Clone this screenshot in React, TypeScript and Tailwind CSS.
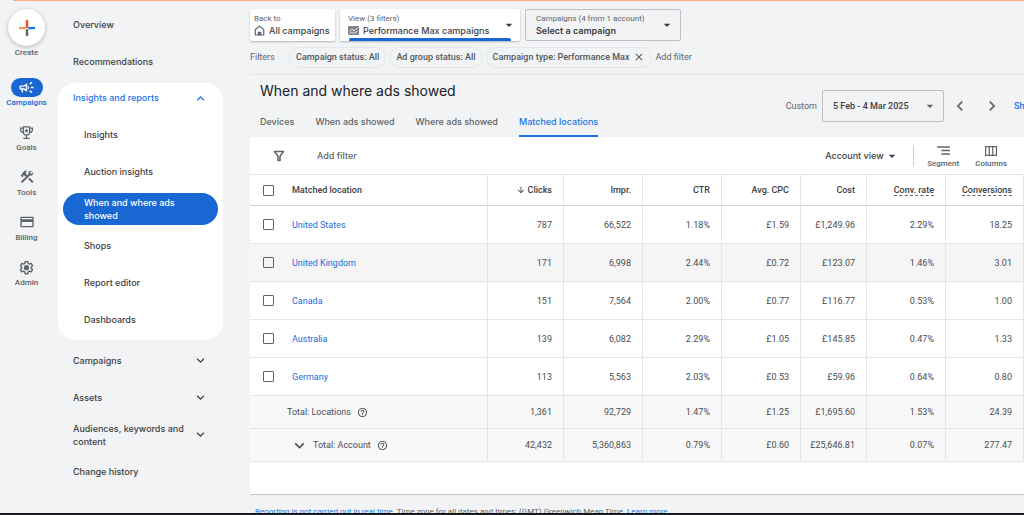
import React from 'react';
import {
  MdArrowDownward,
  MdArrowDropDown,
  MdClose,
  MdConstruction,
  MdCreditCard,
  MdExpandLess,
  MdExpandMore,
  MdHelpOutline,
  MdChevronLeft,
  MdChevronRight,
  MdOutlineCampaign,
  MdSegment,
} from 'react-icons/md';

const sans = "font-['Inter','Liberation_Sans',sans-serif]";

/* ---------- icons ---------- */

const PlusIcon = () => (
  <svg className="h-4 w-4" viewBox="0 0 16 16" aria-hidden="true">
    <path d="M6.8 0h2.4v8H6.8z" fill="#f4511e" />
    <path d="M0 6.9h6.8v2.3H0z" fill="#f29a5c" />
    <path d="M9.2 6.9H16v2.3H9.2z" fill="#1a73e8" />
    <path d="M6.8 9.2h2.4V16H6.8z" fill="#5f6368" />
  </svg>
);

const TrophyIcon = () => (
  <svg className="h-[15px] w-[15px]" viewBox="0 0 24 24" fill="none" stroke="currentColor" strokeWidth="2" aria-hidden="true">
    <path d="M7 3h10v8a5 5 0 0 1-10 0zM7 5H2.500v2.500a4.500 4.500 0 0 0 4.700 4.500M17 5h4.500v2.500a4.500 4.500 0 0 1-4.700 4.500M12 16v5M7 21.500h10" />
    <path
      d="m12 5.500 1 2.200 2.400.2-1.800 1.600.5 2.300L12 10.600l-2.100 1.200.5-2.300-1.800-1.600 2.400-.2z"
      fill="currentColor"
      stroke="none"
    />
  </svg>
);

const GearIcon = () => (
  <svg className="h-[15px] w-[15px]" viewBox="0 0 24 24" fill="none" stroke="currentColor" strokeWidth="2.2" strokeLinejoin="round" aria-hidden="true">
    <path d="M9.800 2.500h4.400l.6 2.900 1.900 1.100 2.800-1 2.200 3.800-2.200 1.900v2l2.200 1.900-2.200 3.800-2.800-1-1.900 1.100-.6 2.900H9.800l-.6-2.900-1.900-1.100-2.800 1-2.200-3.800 2.200-1.900v-2L2.300 9.300l2.200-3.800 2.800 1 1.900-1.100z" />
    <circle cx="12" cy="12.200" r="3" fill="currentColor" />
  </svg>
);

const HouseIcon = () => (
  <svg className="h-[11px] w-[11px] text-[#5f6368]" viewBox="0 0 22 22" fill="none" stroke="currentColor" strokeWidth="2.400" aria-hidden="true">
    <path d="M2.500 20V9L11 2.500 19.500 9v11z" />
    <path d="M7.500 20v-6.500h7V20z" fill="currentColor" stroke="none" />
  </svg>
);

const ChartIcon = () => (
  <svg className="h-[9px] w-[11px]" viewBox="0 0 22 18" aria-hidden="true">
    <rect width="22" height="18" rx="2" fill="#80868b" />
    <path d="M3 11l5-5 4 4 7-7M3 15l5-3 4 3 7-5" fill="none" stroke="#fff" strokeWidth="1.600" />
  </svg>
);

const FunnelIcon = () => (
  <svg className="h-3 w-3" viewBox="0 0 24 24" fill="none" stroke="currentColor" strokeWidth="3" strokeLinejoin="round" aria-hidden="true">
    <path d="M3 3h18l-7 9.500V21h-4v-8.500z" />
  </svg>
);

const ColumnsIcon = () => (
  <svg className="h-[10px] w-3" viewBox="0 0 24 20" fill="none" stroke="currentColor" strokeWidth="2.400" aria-hidden="true">
    <path d="M1.200 1.200h21.600v17.600H1.200zM8.500 1v18M15.500 1v18" />
  </svg>
);

/* ---------- data ---------- */

const railItems = [
  { label: 'Goals', icon: <TrophyIcon /> },
  { label: 'Tools', icon: <MdConstruction size={16} /> },
  { label: 'Billing', icon: <MdCreditCard size={16} /> },
  { label: 'Admin', icon: <GearIcon /> },
];

const reportItems = ['Insights', 'Auction insights', 'When and where ads showed', 'Shops', 'Report editor', 'Dashboards'];
const activeReport = 'When and where ads showed';

const sections = [
  { label: 'Campaigns', expandable: true },
  { label: 'Assets', expandable: true },
  { label: 'Audiences, keywords and content', expandable: true },
  { label: 'Change history', expandable: false },
];

const tabs = ['Devices', 'When ads showed', 'Where ads showed', 'Matched locations'];

const columns = [
  { label: 'Clicks', width: 'w-[76px]', sorted: true },
  { label: 'Impr.', width: 'w-[79px]' },
  { label: 'CTR', width: 'w-[79px]' },
  { label: 'Avg. CPC', width: 'w-[79px]' },
  { label: 'Cost', width: 'w-[66px]' },
  { label: 'Conv. rate', width: 'w-[79px]', hint: true },
  { label: 'Conversions', width: 'w-[78px]', hint: true },
];

const rows = [
  { name: 'United States', values: ['787', '66,522', '1.18%', '£1.59', '£1,249.96', '2.29%', '18.25'] },
  { name: 'United Kingdom', values: ['171', '6,998', '2.44%', '£0.72', '£123.07', '1.46%', '3.01'] },
  { name: 'Canada', values: ['151', '7,564', '2.00%', '£0.77', '£116.77', '0.53%', '1.00'] },
  { name: 'Australia', values: ['139', '6,082', '2.29%', '£1.05', '£145.85', '0.47%', '1.33'] },
  { name: 'Germany', values: ['113', '5,563', '2.03%', '£0.53', '£59.96', '0.64%', '0.80'] },
];

const totals = [
  { name: 'Total: Locations', values: ['1,361', '92,729', '1.47%', '£1.25', '£1,695.60', '1.53%', '24.39'] },
  { name: 'Total: Account', expandable: true, values: ['42,432', '5,360,863', '0.79%', '£0.60', '£25,646.81', '0.07%', '277.47'] },
];

/* ---------- left side ---------- */

const Rail = () => (
  <nav aria-label="Main" className="flex w-[53px] shrink-0 flex-col items-center pt-[7px] text-[8px] leading-3 font-medium text-[#5f6368]">
    <button className="flex flex-col items-center gap-px">
      <span className="flex h-[37px] w-[37px] items-center justify-center rounded-full bg-white shadow-[0_1px_4px_rgba(60,64,67,0.35)]">
        <PlusIcon />
      </span>
      Create
    </button>
    <a href="#campaigns" className="mt-[19px] flex flex-col items-center text-[#1967d2]">
      <span className="flex h-[19px] w-8 items-center justify-center rounded-full bg-[#1967d2] text-white">
        <MdOutlineCampaign size={17} />
      </span>
      Campaigns
    </a>
    <div className="mt-[13px] flex flex-col gap-[13px]">
      {railItems.map((item) => (
        <a key={item.label} href={`#${item.label.toLowerCase()}`} className="flex flex-col items-center">
          <span className="flex h-5 items-center">{item.icon}</span>
          {item.label}
        </a>
      ))}
    </div>
  </nav>
);

const SideNav = () => (
  <nav aria-label="Campaigns" className={`${sans} w-[170px] shrink-0 pt-1 pl-[5px] text-[9px] leading-[13px] font-medium text-[#3c4043]`}>
    <a href="#overview" className="flex h-[37px] items-center pl-[15px]">Overview</a>
    <a href="#recommendations" className="flex h-[37px] items-center pl-[15px]">Recommendations</a>

    <div className="mt-[3px] rounded-[18px] bg-white px-[5px] pb-[2px]">
      <button className="flex h-[33px] w-full items-start justify-between pt-2 pr-[10px] pl-[10px] text-[#1a73e8]">
        Insights and reports
        <MdExpandLess size={15} />
      </button>
      {reportItems.map((item) => (
        <div key={item} className="flex h-[37px] items-center">
          <a
            href="#report"
            aria-current={item === activeReport ? 'page' : undefined}
            className={`flex h-8 w-full items-center rounded-full pr-9 pl-[21px] ${item === activeReport ? 'bg-[#1967d2] text-white' : ''}`}
          >
            {item}
          </a>
        </div>
      ))}
    </div>

    <div className="mt-[2px]">
      {sections.map((section) => (
        <button key={section.label} className="flex h-[37px] w-full items-center justify-between pr-[15px] pl-[15px] text-left">
          <span className="w-[120px]">{section.label}</span>
          {section.expandable && <MdExpandMore size={15} />}
        </button>
      ))}
    </div>
  </nav>
);

/* ---------- header ---------- */

const ScopeBar = () => (
  <div className="flex gap-[5px] pt-[7px] text-[8px] leading-[11px] text-[#5f6368]">
    <a href="#all" className="flex h-8 w-[85px] flex-col justify-center rounded-[2px] bg-white pl-1 shadow-[0_1px_2px_rgba(60,64,67,0.35)]">
      <span>Back to</span>
      <span className={`${sans} flex items-center gap-1 text-[9px] leading-[13px] font-medium whitespace-nowrap text-[#3c4043]`}>
        <HouseIcon />
        All campaigns
      </span>
    </a>
    <label className="relative flex h-8 w-[180px] items-center justify-between rounded-[2px] bg-white pr-[3px] pl-2 shadow-[0_1px_2px_rgba(60,64,67,0.35)]">
      <span className="flex flex-col">
        <span>View (3 filters)</span>
        <span className="flex items-center gap-1">
          <ChartIcon />
          <select className={`${sans} h-[13px] appearance-none text-[9px] leading-[13px] font-medium text-[#3c4043]`}>
            <option>Performance Max campaigns</option>
          </select>
        </span>
      </span>
      <MdArrowDropDown size={16} className="text-[#3c4043]" />
      <span className="absolute right-[9px] bottom-0 left-[9px] h-[3px] rounded-t-[2px] bg-[#1967d2]" />
    </label>
    <label className="flex h-8 w-[156px] items-center justify-between rounded-[2px] border border-[#bdc1c6] pr-[5px] pl-[10px]">
      <span className="flex flex-col">
        <span className="whitespace-nowrap">Campaigns (4 from 1 account)</span>
        <select className={`${sans} h-[13px] appearance-none text-[9px] leading-[13px] font-semibold text-[#3c4043]`}>
          <option>Select a campaign</option>
        </select>
      </span>
      <MdArrowDropDown size={16} className="text-[#3c4043]" />
    </label>
  </div>
);

const chip = 'flex h-[21px] items-center rounded-full border border-[#e4e6e9] px-[6px] font-medium text-[#54575b]';

const FilterChips = () => (
  <div className="flex h-[34px] items-center border-b border-[#e3e5e8] pb-px text-[9px] leading-3 whitespace-nowrap text-[#5f6368]">
    <span className="w-[39px]">Filters</span>
    <div className="flex gap-[3px]">
      <button className={chip}>Campaign status: All</button>
      <button className={chip}>Ad group status: All</button>
      <span className={chip}>
        Campaign type: Performance Max
        <button aria-label="Remove filter" className="ml-[3px]">
          <MdClose size={12} />
        </button>
      </span>
    </div>
    <button className="ml-1">Add filter</button>
  </div>
);

const ReportHeader = () => (
  <div className="flex h-[62px] justify-between">
    <div className={`${sans} flex flex-col justify-between pt-[5px] pl-[10px]`}>
      <h1 className="text-[14px] leading-[22px] text-[#202124]">When and where ads showed</h1>
      <div role="tablist" className="flex gap-[21px] text-[9px] leading-[13px] font-medium whitespace-nowrap text-[#5f6368]">
        {tabs.map((tab) => {
          const active = tab === 'Matched locations';
          return (
            <button
              key={tab}
              role="tab"
              aria-selected={active}
              className={`border-b-2 pb-[7px] ${active ? 'border-[#1a73e8] text-[#1a73e8]' : 'border-transparent'}`}
            >
              {tab}
            </button>
          );
        })}
      </div>
    </div>
    <div className="flex items-center text-[9px] leading-3 text-[#5f6368]">
      <label htmlFor="range" className="mr-[5px]">Custom</label>
      <span className="flex h-8 w-[122px] items-center justify-between rounded-[2px] border border-[#bdc1c6] pr-[5px] pl-[10px]">
        <select id="range" className="appearance-none text-[9px] font-medium text-[#3c4043]">
          <option>5 Feb - 4 Mar 2025</option>
        </select>
        <MdArrowDropDown size={16} />
      </span>
      <button aria-label="Previous period" className="ml-[6px]">
        <MdChevronLeft size={20} />
      </button>
      <button aria-label="Next period" className="ml-3">
        <MdChevronRight size={20} />
      </button>
      <a href="#last" className="ml-3 w-[10px] font-medium text-[#1a73e8]">Sh</a>
    </div>
  </div>
);

/* ---------- table ---------- */

const Toolbar = () => (
  <div className={`${sans} flex h-[37px] items-center text-[9px] leading-3 font-medium text-[#3c4043]`}>
    <button aria-label="Filter" className="ml-[23px] text-[#5f6368]">
      <FunnelIcon />
    </button>
    <button className="ml-8 text-[#5f6368]">Add filter</button>
    <span className="ml-auto flex items-center">
      <select aria-label="View" className="appearance-none">
        <option>Account view</option>
      </select>
      <MdArrowDropDown size={16} />
    </span>
    <div className="ml-[13px] flex h-[21px] items-center gap-4 border-l border-[#c6d0dc] pr-[17px] pl-[13px] font-['Roboto','Liberation_Sans',sans-serif] text-[8px] leading-[10px] text-[#5f6368]">
      <button className="flex flex-col items-center">
        <span className="flex h-4 items-center">
          <MdSegment size={17} />
        </span>
        Segment
      </button>
      <button className="flex flex-col items-center">
        <span className="flex h-4 items-center">
          <ColumnsIcon />
        </span>
        Columns
      </button>
    </div>
  </div>
);

const Checkbox = ({ label }: { label: string }) => (
  <input type="checkbox" aria-label={label} className="block h-[11px] w-[11px] shrink-0 appearance-none rounded-[1px] border border-[#5f6368] checked:bg-[#1a73e8]" />
);

const valueCell = 'border-r border-[#e3e5e8] pr-[11px] text-right';

const LocationsTable = () => (
  <table className="w-full table-fixed border-collapse text-[9px] leading-3 whitespace-nowrap text-[#4a4d51]">
    <thead>
      <tr className="h-[31px] border-t border-b border-t-[#e3e5e8] border-b-[#cfd2d6] text-[#3c4043]">
        <th className="border-r border-[#e3e5e8] pl-[13px] text-left font-medium">
          <span className="flex items-center gap-[18px]">
            <Checkbox label="Select all" />
            Matched location
          </span>
        </th>
        {columns.map((col) => (
          <th key={col.label} className={`${valueCell} ${col.width} font-medium`}>
            {col.sorted ? (
              <span className="flex items-center justify-end gap-[2px]">
                <MdArrowDownward size={10} />
                {col.label}
              </span>
            ) : (
              <span className={col.hint ? 'border-b border-dashed border-[#5f6368]' : ''}>{col.label}</span>
            )}
          </th>
        ))}
      </tr>
    </thead>
    <tbody>
      {rows.map((row) => (
        <tr key={row.name} className={`h-[38px] border-b border-[#e3e5e8] ${row.name === 'United Kingdom' ? 'bg-[#f5f5f5]' : ''}`}>
          <td className="border-r border-[#e3e5e8] pl-[13px]">
            <span className="flex items-center gap-[18px]">
              <Checkbox label={row.name} />
              <a href="#location" className="text-[#1a6ddb]">{row.name}</a>
            </span>
          </td>
          {row.values.map((value, i) => (
            <td key={i} className={valueCell}>{value}</td>
          ))}
        </tr>
      ))}
    </tbody>
    <tfoot>
      {totals.map((row) => (
        <tr key={row.name} className="h-[33px] border-b border-[#e3e5e8] bg-[#f8f8f9]">
          <td className="border-r border-[#e3e5e8] pl-[37px]">
            <span className="flex items-center gap-[6px]">
              {row.expandable && (
                <button aria-label="Expand account total" className="-mr-[2px] pl-[3px]">
                  <MdExpandMore size={19} />
                </button>
              )}
              {row.name}
              <MdHelpOutline size={11} />
            </span>
          </td>
          {row.values.map((value, i) => (
            <td key={i} className={valueCell}>{value}</td>
          ))}
        </tr>
      ))}
    </tfoot>
  </table>
);

export default function App() {
  return (
    <div className="flex h-screen flex-col overflow-hidden border-b-2 border-[#17191c] bg-[#f1f3f4] font-['Roboto','Liberation_Sans',sans-serif]">
      <div className="ml-[13px] h-px shrink-0 bg-[#fbab7e]" />
      <div className="flex min-h-0 flex-1 pt-px">
        <Rail />
        <SideNav />
        <main className="ml-[27px] min-w-0 flex-1">
          <ScopeBar />
          <FilterChips />
          <ReportHeader />
          <section className="border-b border-[#c4c7ca] bg-white pb-8">
            <Toolbar />
            <LocationsTable />
          </section>
          <footer className="mt-[11px] pl-[5px] text-[8px] leading-3 text-[#5f6368]">
            <a href="#reporting" className="text-[#1a73e8]">Reporting is not carried out in real time.</a> Time zone for all dates and times: (GMT) Greenwich Mean Time.{' '}
            <a href="#learn" className="text-[#1a73e8]">Learn more</a>
          </footer>
        </main>
      </div>
    </div>
  );
}
